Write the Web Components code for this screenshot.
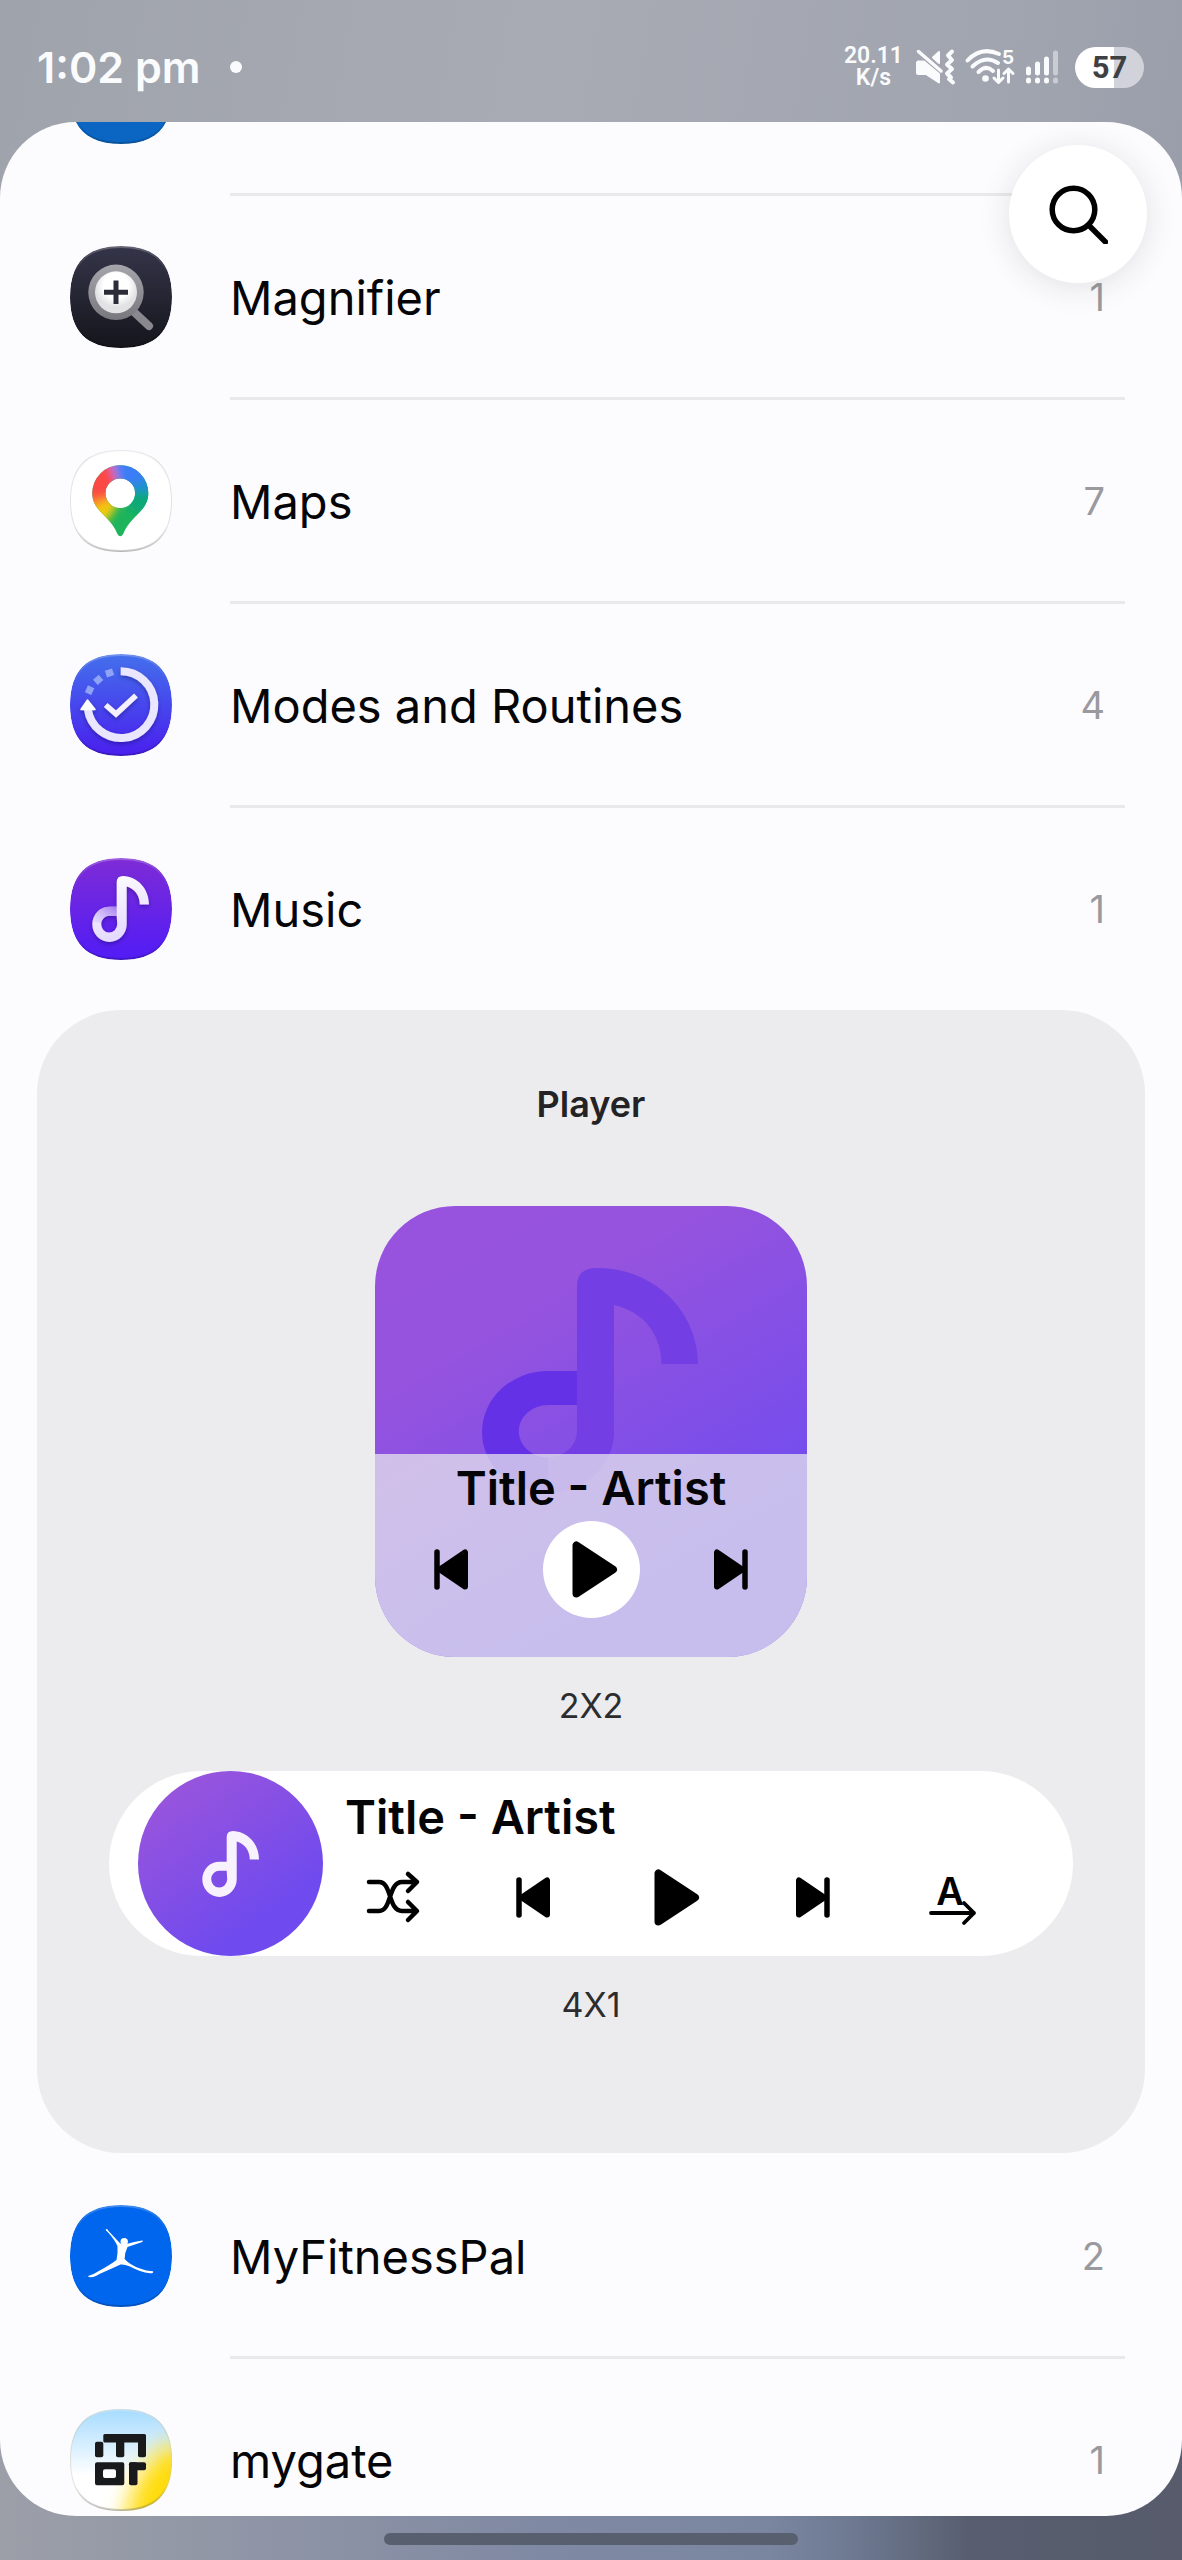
<!DOCTYPE html>
<html lang="en">
<head>
<meta charset="utf-8">
<meta name="viewport" content="width=device-width, initial-scale=1">
<title>Widgets</title>
<style>
html, body { margin: 0; height: 100%; }
body { font-family: Inter, Roboto, sans-serif; color: #050507; background: #a4a8b1; }
</style>
</head>
<body>
<widget-picker></widget-picker>

<script>
const define = (name, html, setup) => {
  const tpl = document.createElement('template');
  tpl.innerHTML = html;
  customElements.define(name, class extends HTMLElement {
    connectedCallback() {
      if (this.shadowRoot) return;
      this.attachShadow({ mode: 'open' }).append(tpl.content.cloneNode(true));
      if (setup) setup(this, this.shadowRoot);
    }
  });
};

const NOTE = 'M46.7 48.7V24Q46.7 18 53 18C68 18.6 79 31 79 46.6H69.8C69.6 37 64.5 31 56.7 28.6V66.4A17.2 17.6 0 1 1 39.5 48.7ZM46.7 57.7H39.5A8 8.4 0 1 0 47.2 66.2Z';
const SQUIRCLE = 'M51 0C85.5 0 102 16.5 102 51S85.5 102 51 102S0 85.5 0 51S16.5 0 51 0Z';

const tile = (fill, defs, body) => `
  <defs>${defs}
    <linearGradient id="rim" x2="0" y2="1"><stop offset="0" stop-color="#fff" stop-opacity=".25"/><stop offset=".3" stop-color="#888" stop-opacity="0"/><stop offset=".75" stop-color="#000" stop-opacity="0"/><stop offset="1" stop-color="#000" stop-opacity=".2"/></linearGradient>
    <filter id="soft" x="-20%" y="-20%" width="140%" height="140%"><feDropShadow dx="0" dy="2" stdDeviation="2" flood-color="#10003a" flood-opacity=".35"/></filter>
    <clipPath id="clip"><path d="${SQUIRCLE}"/></clipPath>
  </defs>
  <g clip-path="url(#clip)"><path d="${SQUIRCLE}" fill="${fill}"/>${body}<path d="${SQUIRCLE}" fill="none" stroke="url(#rim)" stroke-width="4"/></g>`;

const APP_ICONS = {
  blue: tile('#0a66c2', '', ''),
  magnifier: tile('url(#g)',
    `<linearGradient id="g" x2="0" y2="1"><stop stop-color="#35354a"/><stop offset="1" stop-color="#15151c"/></linearGradient>
     <linearGradient id="m" x2="0" y2="1"><stop stop-color="#a5a5ab"/><stop offset="1" stop-color="#77777d"/></linearGradient>
     <radialGradient id="l" cy=".35"><stop offset=".6" stop-color="#fff"/><stop offset="1" stop-color="#e2e2e5"/></radialGradient>`,
    `<path d="M64 66L79 80" stroke="#88888e" stroke-width="8" stroke-linecap="round"/>
     <circle cx="46" cy="46.3" r="27.7" fill="url(#m)"/><circle cx="46" cy="46.3" r="21" fill="url(#l)"/>
     <path d="M46 34.5V58M34 46.3H58" stroke="#2b2c38" stroke-width="5"/>`),
  maps: tile('#fff',
    `<clipPath id="pin"><path clip-rule="evenodd" d="M50.3 15.2A28 28 0 0 1 78.3 43.2C78.3 53 73 59 67 65C60 72 56 77 53.2 84Q50.3 88.5 47.4 84C44.6 77 40.6 72 33.6 65C27.6 59 22.3 53 22.3 43.2A28 28 0 0 1 50.3 15.2ZM50.3 28.4A14.8 14.8 0 1 0 50.3 58A14.8 14.8 0 1 0 50.3 28.4Z"/></clipPath>
     <filter id="b"><feGaussianBlur stdDeviation="4"/></filter>`,
    `<g clip-path="url(#pin)"><rect width="102" height="102" fill="#1db45c"/><g filter="url(#b)">
      <path d="M50 43L80 0H120V60Z" fill="#1e8fd0"/><path d="M50 43L90 42L110 75L60 60Z" fill="#10a878"/><path d="M50 43L42 0H90L76 28Z" fill="#3b7df6"/>
      <path d="M50 43L22 0H44Z" fill="#a877dd"/><path d="M50 43L0 60V0H34Z" fill="#fb4a45"/><path d="M50 45L0 52V68L30 72Z" fill="#fb8a20"/><path d="M50 45L14 62L32 76L44 62Z" fill="#f2cb10"/></g></g>
     <path d="${SQUIRCLE}" fill="none" stroke="#e3e3e5" stroke-width="2"/>`),
  modes: tile('url(#g)',
    `<linearGradient id="g" x2="0" y2="1"><stop stop-color="#4370ec"/><stop offset="1" stop-color="#4a1eee"/></linearGradient>`,
    `<g fill="#9db1f8" opacity=".85"><rect x="-3.5" y="-3.5" width="7.5" height="7" transform="translate(39.3 19)rotate(-18)"/><rect x="-3.5" y="-3.5" width="7.5" height="7" transform="translate(28 26)rotate(-42)"/><rect x="-3.5" y="-3.5" width="7.5" height="7" transform="translate(19.5 36.4)rotate(-66)"/></g>
     <g filter="url(#soft)"><path d="M50.7 17.2A33.4 33.4 0 1 1 17.8 55" fill="none" stroke="#ebe6ff" stroke-width="8"/><path d="M17.5 46L25 55.5H11Z" fill="#fff" stroke="#fff" stroke-width="1.5" stroke-linejoin="round"/>
     <path d="M35.7 51L46 60L66 41.5" fill="none" stroke="#f4f0ff" stroke-width="5.6"/></g>`),
  music: tile('url(#g)',
    `<linearGradient id="g" x2="0" y2="1"><stop stop-color="#7e2cd6"/><stop offset="1" stop-color="#511cf6"/></linearGradient>
     <linearGradient id="n" x1="0" y1="0" x2=".3" y2="1"><stop stop-color="#fff"/><stop offset="1" stop-color="#e4d9ff"/></linearGradient>
     <linearGradient id="f" x1="1" y1="0" x2="0" y2="1"><stop stop-color="#9a6cee" stop-opacity=".9"/><stop offset="1" stop-color="#d5c3fb" stop-opacity=".3"/></linearGradient>`,
    `<g filter="url(#soft)"><path d="${NOTE}" fill="url(#n)" fill-rule="evenodd"/></g><path d="M46.7 48.7H39.5A17.2 17.6 0 0 0 22.5 64L31.5 65A8 8 0 0 1 39.5 57.7H46.7Z" fill="url(#f)"/>`),
  fitness: tile('#0066ee', '',
    `<g fill="#fff"><circle cx="54.2" cy="36.8" r="3.7"/>
     <path d="M35.8 24Q37.5 23.5 38.5 26L50 38.3Q53 41.5 56.5 39Q64 36.5 72 35.4Q74 36 71.5 37.3L57.5 42Q54.5 48 54.6 54Q60 60 70 63.5Q76 66 83 66.3Q84 68.5 80 68.3Q70 67 60 61.5Q54 59 50.5 59.5Q42 63.5 35 66.5Q29 69 26 71Q21 73 18 71.8Q18 70.5 21 70Q24 69 28 66.5Q40 60 46.5 55Q48 47 47.5 41.5Q46.5 38 41.5 31.5Q38 27 36 25.5Z"/></g>`),
  gate: tile('url(#g)',
    `<linearGradient id="g" x2="0" y2="1"><stop stop-color="#a6dbff"/><stop offset=".65" stop-color="#fff"/></linearGradient>
     <filter id="b" x="-40%" y="-40%" width="180%" height="180%"><feGaussianBlur stdDeviation="11"/></filter>`,
    `<path d="M52 116L68 68L94 36L140 44V130Z" fill="#ffdc10" filter="url(#b)"/>
     <g fill="#191a1c"><rect x="33.3" y="25" width="42.7" height="8.5" rx="1.5"/><rect x="25" y="32.7" width="8.3" height="15.6" rx="2"/><rect x="46" y="27" width="8.3" height="21.3" rx="2"/><rect x="68" y="27" width="8" height="21.3" rx="2"/>
     <path fill-rule="evenodd" d="M27 53.3H52.3Q54.3 53.3 54.3 55.3V74.3Q54.3 76.3 52.3 76.3H27Q25 76.3 25 74.3V55.3Q25 53.3 27 53.3ZM35 60.3Q33 60.3 33 62.3V67Q33 69 35 69H44Q46 69 46 67V62.3Q46 60.3 44 60.3Z"/>
     <rect x="59" y="53.3" width="8.5" height="23" rx="2"/><rect x="59" y="53.3" width="17" height="8" rx="2"/></g>
     <path d="${SQUIRCLE}" fill="none" stroke="#c9c9b8" stroke-opacity=".5" stroke-width="2"/>`)
};

define('app-icon', `
<style>:host{display:block;flex:none} svg{display:block;width:102px;height:102px}</style>
<svg viewBox="0 0 102 102" aria-hidden="true"></svg>`,
(el, root) => { root.querySelector('svg').innerHTML = APP_ICONS[el.getAttribute('name')]; });

const GLYPHS = {
  prev: ['0 0 34 41', `<g stroke="#000" stroke-linecap="round" stroke-linejoin="round"><path d="M3 3V38" stroke-width="5.5"/><path d="M6 20.5L31 3.5V37.5Z" stroke-width="6"/></g>`, 34, 41],
  next: ['0 0 34 41', `<g stroke="#000" stroke-linecap="round" stroke-linejoin="round"><path d="M31 3V38" stroke-width="5.5"/><path d="M28 20.5L3 3.5V37.5Z" stroke-width="6"/></g>`, 34, 41],
  play: ['0 0 53 57', '<path d="M11.5 4.5V52.5L48 28.5Z" stroke="#000" stroke-width="8" stroke-linejoin="round"/>', 53, 57],
  shuffle: ['0 0 54 52', '<path d="M3 11H13C26 11 22 40 36 40H50M3 40H13C26 40 22 11 36 11H50M42 3L51 11L42 20M42 31L51 40L42 49" fill="none" stroke="#000" stroke-width="4.5" stroke-linecap="round" stroke-linejoin="round"/>', 54, 52],
  order: ['0 0 48 60', '<text x="21" y="38" text-anchor="middle" font-family="Inter, sans-serif" font-size="38" font-weight="600">A</text><path d="M2 46H45M35 36L45 46L35 56" fill="none" stroke="#000" stroke-width="3.8" stroke-linecap="round" stroke-linejoin="round"/>', 48, 60]
};

define('media-button', `
<style>
:host{display:flex;justify-content:center;width:140px}
button{display:flex;align-items:center;justify-content:center;width:97px;height:97px;padding:0;border:0;border-radius:50%;background:none;cursor:pointer}
svg{overflow:visible}
:host([filled]) button{background:#fff}
:host([compact]) button{height:60px;border-radius:0}
</style>
<button type="button"><svg></svg></button>`,
(el, root) => {
  const [box, art, w, h] = GLYPHS[el.getAttribute('name')];
  const svg = root.querySelector('svg');
  svg.setAttribute('viewBox', box);
  svg.setAttribute('width', w);
  svg.setAttribute('height', h);
  svg.setAttribute('aria-hidden', 'true');
  svg.innerHTML = art;
  root.querySelector('button').setAttribute('aria-label', el.getAttribute('label'));
});

define('status-bar', `
<style>
:host{display:flex;align-items:center;justify-content:space-between;flex:none;box-sizing:border-box;height:122px;padding:12px 38px 0 37px;color:#fafbfc}
.left,.right{display:flex;align-items:center}
.left{gap:30px;font-size:43px;font-weight:600;line-height:52px}
.dot{width:12px;height:12px;border-radius:50%;background:#fafbfc}
.right{gap:10px}
.speed{display:flex;flex-direction:column;align-items:center;font:600 23px/22px Roboto,sans-serif}
svg{display:block;overflow:visible}
.battery{width:69px;height:41px;border-radius:21px;background:linear-gradient(90deg,#fff 57%,#d2d3da 57%);color:#3f4043;font:700 31px/41px Roboto,sans-serif;text-align:center}
</style>
<div class="left"><span>1:02 pm</span><span class="dot"></span></div>
<div class="right">
  <div class="speed"><span>20.11</span><span>K/s</span></div>
  <svg width="42" height="36" viewBox="0 0 42 36" fill="none" stroke="#fafbfc" stroke-linecap="round" stroke-linejoin="round">
    <path d="M5 12.5H11L26 25V33.5L13 25H5Q4 25 4 24V13.5Z" fill="#fafbfc" stroke-width="2"/><path d="M20 8.5L26 3V14Z" fill="#fafbfc" stroke-width="2"/><path d="M5.5 2.5L28 22" stroke-width="3.5"/>
    <path d="M39 2.5L35 6.5L39 11L34 15.5L39 20L34 24.5L38 28.5L36 30L40 33.5" stroke-width="4"/></svg>
  <svg width="51" height="36" viewBox="0 0 51 36" fill="none" stroke="#fafbfc" stroke-width="4" stroke-linecap="round">
    <path d="M2.5 11.5Q16 -3 34 5M7.5 17.5Q20 5.5 33 14M13.5 23Q21 15.5 28 22"/><circle cx="20.5" cy="29.5" r="3.3" fill="#fafbfc" stroke="none"/>
    <path d="M33.5 21V33M29 29L33.5 33.5L38 29M43.5 33V20M39 24.5L43.5 20L48 24.5" stroke-width="3" stroke-linejoin="round"/>
    <text x="43" y="15" text-anchor="middle" font-family="Inter, sans-serif" font-size="19" font-weight="700" fill="#fafbfc" stroke="none">5</text></svg>
  <svg width="39" height="36" viewBox="0 0 39 36" stroke="#fafbfc" stroke-width="5" stroke-linecap="round">
    <path d="M2.500 20V24M11.500 15V24M20.500 10V24M2.500 31V32M11.500 31V32M20.500 31V32"/><path d="M29.500 4V24M29.500 31V32" stroke="#c9ccd2"/></svg>
  <div class="battery">57</div>
</div>`);

define('search-button', `
<style>
:host{display:block}
button{display:flex;align-items:center;justify-content:center;width:138px;height:138px;padding:0;border:0;border-radius:50%;background:#fff;box-shadow:0 4px 32px rgba(30,30,50,.12);cursor:pointer}
</style>
<button type="button" aria-label="Search"><svg width="60" height="60" viewBox="0 0 60 60" fill="none" stroke="#000" stroke-width="5.5" stroke-linecap="round" aria-hidden="true"><circle cx="25.5" cy="25.5" r="21.3"/><path d="M41 41.500L57.5 58"/></svg></button>`);

define('app-row', `
<style>
:host{display:block}
button{display:flex;align-items:center;width:100%;padding:0 57px 0 70px;border:0;background:none;color:inherit;font:inherit;text-align:left;cursor:pointer}
.body{display:flex;align-items:center;justify-content:space-between;flex:1;box-sizing:border-box;height:204px;margin-left:58px;padding-right:20px;border-bottom:3px solid #e9e9eb}
.icon{padding-bottom:3px}
:host([last]) .body{height:201px;border:0}
:host([last]) .icon{padding:0}
.name{font-size:47px;line-height:60px;padding-top:2px}
.count{font-size:38px;line-height:48px;color:#9a9a9e}
</style>
<button type="button"><span class="icon"><slot name="icon"></slot></span><span class="body"><span class="name"><slot></slot></span><span class="count"><slot name="count"></slot></span></span></button>`);

define('player-square', `
<style>
:host{display:flex;flex-direction:column;justify-content:flex-end;position:relative;width:432px;height:451px;border-radius:80px;overflow:hidden;background:linear-gradient(150deg,#9853de 0%,#9553de 28%,#724cee 76%)}
.art{position:absolute;inset:0;width:100%;height:100%}
.panel{position:relative;display:flex;flex-direction:column;align-items:center;gap:5px;box-sizing:border-box;height:203px;padding-top:6px;background:rgba(236,239,236,.7)}
.title{font-size:47px;font-weight:600;line-height:56px}
.controls{display:flex}
</style>
<svg class="art" viewBox="0 0 432 451" aria-hidden="true">
  <path d="M202 165H173A66 61 0 0 0 173 287V251.500A29 26 0 0 1 173 199H202Z" fill="#6531e6"/>
  <path d="M202 226V80Q202 62 222 62C280 62 323 106 323 158H286.500C286.500 130 270 106 239 99V226A66 61 0 0 1 173 287V251.500A29 26 0 0 0 202 226Z" fill="#733fe4"/>
</svg>
<div class="panel">
  <div class="title">Title - Artist</div>
  <div class="controls"><media-button name="prev" label="Previous"></media-button><media-button name="play" label="Play" filled></media-button><media-button name="next" label="Next"></media-button></div>
</div>`);

define('player-bar', `
<style>
:host{display:flex;align-self:stretch;box-sizing:border-box;padding:0 51px 0 29px;border-radius:93px;background:#fff}
.art{display:flex;align-items:center;justify-content:center;flex:none;width:185px;height:185px;border-radius:50%;background:linear-gradient(145deg,#9a55dc 10%,#6f4aee 75%)}
.main{flex:1;display:flex;flex-direction:column}
.title{font-size:47px;font-weight:600;line-height:56px;padding:18px 0 0 22px}
.controls{display:flex;justify-content:space-between;padding-top:22px}
</style>
<div class="art"><svg width="102" height="102" viewBox="0 0 102 102" aria-hidden="true"><path d="${NOTE}" fill="#f8f2fe" fill-rule="evenodd"/></svg></div>
<div class="main">
  <div class="title">Title - Artist</div>
  <div class="controls"><media-button compact name="shuffle" label="Shuffle"></media-button><media-button compact name="prev" label="Previous"></media-button><media-button compact name="play" label="Play"></media-button><media-button compact name="next" label="Next"></media-button><media-button compact name="order" label="Play in order"></media-button></div>
</div>`);

define('widget-card', `
<style>
:host{display:flex;flex-direction:column;align-items:center;margin:1px 37px 2px;padding:72px 72px 128px;border-radius:84px;background:#ececee}
h2{margin:0 0 80px;font-size:36px;font-weight:600;line-height:44px;color:#232326}
.size{margin:29px 0 45px;font-size:34px;line-height:40px;color:#2c2c2f}
.size:last-child{margin-bottom:0}
</style>
<h2>Player</h2>
<player-square></player-square>
<div class="size">2X2</div>
<player-bar></player-bar>
<div class="size">4X1</div>`);

define('widget-picker', `
<style>
:host{display:flex;flex-direction:column;position:relative;height:100vh;overflow:hidden;
background:linear-gradient(90deg,#9c9fa8 0%,#9096a6 20%,#8089a3 46%,#7a86a0 65%,#6e7a92 72%,#585e6f 82%,#575b6c 100%) bottom/100% 180px no-repeat,linear-gradient(100deg,#9fa3ac,#a8abb4 45%,#a0a4af 85%,#989da9) top/100% 300px no-repeat,#a4a8b1}
main{flex:1;min-height:0;overflow:hidden;border-radius:76px;background:#fcfcfe}
.list{margin-top:-130px}
search-button{position:absolute;top:145px;right:35px}
nav{display:flex;justify-content:center;flex:none;padding:17px 0 15px}
.handle{width:35%;height:12px;border-radius:6px;background:#58606f}
</style>
<status-bar></status-bar>
<main><div class="list">
  <app-row><app-icon slot="icon" name="blue"></app-icon></app-row>
  <app-row><app-icon slot="icon" name="magnifier"></app-icon>Magnifier<span slot="count">1</span></app-row>
  <app-row><app-icon slot="icon" name="maps"></app-icon>Maps<span slot="count">7</span></app-row>
  <app-row><app-icon slot="icon" name="modes"></app-icon>Modes and Routines<span slot="count">4</span></app-row>
  <app-row last><app-icon slot="icon" name="music"></app-icon>Music<span slot="count">1</span></app-row>
  <widget-card></widget-card>
  <app-row><app-icon slot="icon" name="fitness"></app-icon>MyFitnessPal<span slot="count">2</span></app-row>
  <app-row><app-icon slot="icon" name="gate"></app-icon>mygate<span slot="count">1</span></app-row>
</div></main>
<nav><div class="handle"></div></nav>
<search-button></search-button>`);
</script>
</body>
</html>
